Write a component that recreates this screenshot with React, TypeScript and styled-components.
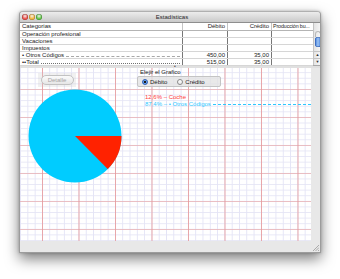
import styled, { createGlobalStyle } from 'styled-components'

const GlobalStyle = createGlobalStyle`
  html, body {
    margin: 0;
    padding: 0;
    background: #ffffff;
  }
  body {
    font-family: 'Liberation Sans', Arial, sans-serif;
  }
`

type Row = {
  label: string
  debit?: string
  credit?: string
  leader?: 'dash' | 'dot'
}

const rows: Row[] = [
  { label: 'Operación profesional' },
  { label: 'Vacaciones' },
  { label: 'Impuestos' },
  { label: '• Otros Códigos', debit: '450,00', credit: '35,00', leader: 'dash' },
  { label: '••Total', debit: '515,00', credit: '35,00', leader: 'dot' },
]

const App = () => {
  return (
    <Page>
      <GlobalStyle />
      <Window>
        <TitleBar>
          <Lights>
            <Light $color='#f0504a' />
            <Light $color='#f5b43a' />
            <Light $color='#5ec643' />
          </Lights>
          <Title>Estadísticas</Title>
        </TitleBar>

        <TableArea>
          <Table>
            <HeaderRow>
              <Cell>Categorias</Cell>
              <Cell $align='right'>Débito</Cell>
              <Cell $align='right'>Crédito</Cell>
              <Cell $tight>Producción bu...</Cell>
            </HeaderRow>
            {rows.map((r) => (
              <BodyRow key={r.label}>
                <Cell>
                  <span>{r.label}</span>
                  {r.leader && <Leader $kind={r.leader} />}
                </Cell>
                <Cell $align='right'>{r.debit}</Cell>
                <Cell $align='right'>{r.credit}</Cell>
                <Cell />
              </BodyRow>
            ))}
          </Table>
          <ScrollBar>
            <ScrollCap />
            <ScrollThumb />
            <ScrollSpace />
            <ScrollArrow>▲</ScrollArrow>
            <ScrollArrow>▼</ScrollArrow>
          </ScrollBar>
        </TableArea>

        <Splitter>
          <span>•</span>
        </Splitter>

        <Body>
          <GraphPaper>
            <TopRow>
              <ButtonWell>
                <DisabledButton disabled>Detalle</DisabledButton>
              </ButtonWell>
              <Chooser>
                <ChooserLabel>Elejir el Grafico</ChooserLabel>
                <RadioBox>
                  <RadioItem>
                    <Radio $checked />
                    Débito
                  </RadioItem>
                  <RadioItem>
                    <Radio />
                    Crédito
                  </RadioItem>
                </RadioBox>
              </Chooser>
            </TopRow>
            <ChartRow>
              <PieChart width='94' height='94' viewBox='0 0 94 94'>
                <circle cx='47' cy='47' r='46.5' fill='#00ccff' />
                <path d='M47 47 L93.5 47 A46.5 46.5 0 0 1 79.7 80.1 Z' fill='#ff2200' />
              </PieChart>
              <Legend>
                <LegendLine $color='#ff3b3b'>12,6% – Coche</LegendLine>
                <LegendLine $color='#2ec8ff'>
                  87,4% – • Otros Códigos
                  <LegendLeader />
                </LegendLine>
              </Legend>
            </ChartRow>
          </GraphPaper>
          <Footer>
            <Grip>
              <svg width='7' height='7' viewBox='0 0 7 7'>
                <path d='M1 7 L7 1 M3.5 7 L7 3.5 M6 7 L7 6' stroke='#9a9a9a' strokeWidth='0.8' />
              </svg>
            </Grip>
          </Footer>
        </Body>
      </Window>
    </Page>
  )
}

export default App

const Page = styled.div`
  width: 340px;
  height: 279px;
  padding: 11px 0 0 19px;
  box-sizing: border-box;
`

const Window = styled.div`
  width: 302px;
  height: 242px;
  display: flex;
  flex-direction: column;
  background: #e8e8e8;
  border: 1px solid #9c9c9c;
  border-top-color: #b0b0b0;
  border-radius: 4px 4px 0 0;
  box-shadow: 0 6px 14px rgba(0, 0, 0, 0.5), 0 0 3px rgba(0, 0, 0, 0.25);
  box-sizing: border-box;
  overflow: hidden;
`

const TitleBar = styled.div`
  position: relative;
  height: 10px;
  flex: none;
  display: flex;
  align-items: center;
  justify-content: center;
  background: linear-gradient(#ececec, #c9c9c9);
  border-bottom: 1px solid #8e8e8e;
`

const Lights = styled.div`
  position: absolute;
  left: 2px;
  top: 2px;
  display: flex;
  gap: 1px;
`

const Light = styled.div<{ $color: string }>`
  width: 6px;
  height: 6px;
  border-radius: 50%;
  background: radial-gradient(circle at 50% 35%, #fff8 0, ${(p) => p.$color} 55%);
  box-shadow: inset 0 0 0 0.5px rgba(0, 0, 0, 0.35);
`

const Title = styled.div`
  font-size: 6px;
  color: #262626;
  line-height: 10px;
  margin-left: 4px;
`

const TableArea = styled.div`
  height: 42px;
  flex: none;
  display: flex;
  background: #ffffff;
  border-bottom: 1px solid #a8a8a8;
`

const Table = styled.div`
  flex: 1;
  display: flex;
  flex-direction: column;
`

const RowBase = styled.div`
  height: 7px;
  display: grid;
  grid-template-columns: 162px 45px 44px 42px;
  font-size: 6px;
  line-height: 7px;
  color: #1a1a1a;
  box-sizing: border-box;
`

const HeaderRow = styled(RowBase)`
  border-bottom: 1px solid #b4b4b4;
  height: 8px;
  & > div + div {
    border-left: 1px solid #c4c4c4;
  }
`

const BodyRow = styled(RowBase)`
  border-bottom: 1px solid #d6d6d6;
  & > div + div {
    border-left: 1px solid #777777;
  }
`

const Cell = styled.div<{ $align?: 'left' | 'right'; $tight?: boolean }>`
  display: flex;
  align-items: center;
  justify-content: ${(p) => (p.$align === 'right' ? 'flex-end' : 'flex-start')};
  padding: 0 ${(p) => (p.$tight ? '1px' : '2px')};
  overflow: hidden;
  white-space: nowrap;
  font-size: ${(p) => (p.$tight ? '5.3px' : '6px')};
  letter-spacing: ${(p) => (p.$tight ? '-0.1px' : '0')};
  span {
    flex: none;
  }
`

const Leader = styled.div<{ $kind: 'dash' | 'dot' }>`
  flex: 1;
  margin: 3px 0 0 2px;
  border-bottom: 1px ${(p) => (p.$kind === 'dash' ? 'dashed #a8a8a8' : 'dotted #707070')};
`

const ScrollBar = styled.div`
  width: 8px;
  flex: none;
  display: flex;
  flex-direction: column;
  align-items: center;
  border-left: 1px solid #c4c4c4;
  background: linear-gradient(to right, #e4e4e4, #f8f8f8);
  padding-top: 8px;
  box-sizing: border-box;
`

const ScrollCap = styled.div`
  width: 6px;
  height: 6px;
  border-radius: 3px 3px 0 0;
  border: 1px solid #b8b8b8;
  border-bottom: none;
  box-sizing: border-box;
`

const ScrollThumb = styled.div`
  width: 6px;
  height: 10px;
  border-radius: 3px;
  background: linear-gradient(to right, #3d78d8, #9cc4f4 50%, #3d78d8);
  box-shadow: inset 0 0 0 0.5px #2a56a8;
`

const ScrollSpace = styled.div`
  flex: 1;
`

const ScrollArrow = styled.div`
  width: 8px;
  height: 6px;
  font-size: 4px;
  line-height: 6px;
  text-align: center;
  color: #333;
  border-top: 1px solid #c4c4c4;
`

const Splitter = styled.div`
  height: 2px;
  flex: none;
  position: relative;
  background: #e0e0e0;
  span {
    position: absolute;
    left: 154px;
    top: -3px;
    font-size: 5px;
    color: #555;
  }
`

const Body = styled.div`
  flex: 1;
  display: flex;
  flex-direction: column;
`

const GraphPaper = styled.div`
  height: 173px;
  flex: none;
  margin: 0 9px 0 0;
  display: flex;
  flex-direction: column;
  background-color: #ffffff;
  background-image:
    linear-gradient(to right, rgba(232, 150, 150, 0.8) 1px, transparent 1px),
    linear-gradient(to bottom, rgba(232, 160, 160, 0.6) 1px, transparent 1px),
    linear-gradient(to right, #e4e4f6 1px, transparent 1px),
    linear-gradient(to bottom, #e8e8f6 1px, transparent 1px);
  background-size: 36.5px 100%, 100% 28px, 7.3px 100%, 100% 5.6px;
  background-position: 22px 0, 0 21px, 0.1px 0, 0 4.2px;
`

const TopRow = styled.div`
  height: 21px;
  flex: none;
  display: flex;
  align-items: flex-start;
`

const ButtonWell = styled.div`
  width: 38px;
  height: 14px;
  margin: 5px 0 0 18px;
  display: flex;
  align-items: center;
  justify-content: center;
  background: rgba(200, 200, 200, 0.25);
`

const DisabledButton = styled.button`
  width: 33px;
  height: 10px;
  padding: 0;
  border: 1px solid #c2c2c2;
  border-radius: 5px;
  background: linear-gradient(#fbfbfb, #e6e6e6);
  font-family: 'Liberation Sans', Arial, sans-serif;
  font-size: 6px;
  line-height: 8px;
  color: #a4a4a4;
`

const Chooser = styled.div`
  margin-left: 61px;
  display: flex;
  flex-direction: column;
  align-items: flex-start;
`

const ChooserLabel = styled.div`
  font-size: 6px;
  line-height: 8px;
  color: #1a1a1a;
  margin-left: 3px;
`

const RadioBox = styled.div`
  width: 84px;
  height: 11px;
  display: flex;
  align-items: center;
  gap: 10px;
  padding-left: 4px;
  box-sizing: border-box;
  background: rgba(225, 225, 225, 0.75);
  border: 1px solid #c4c4c4;
  border-radius: 2px;
`

const RadioItem = styled.label`
  display: flex;
  align-items: center;
  gap: 2px;
  font-size: 6px;
  color: #1a1a1a;
`

const Radio = styled.span<{ $checked?: boolean }>`
  width: 6px;
  height: 6px;
  border-radius: 50%;
  box-sizing: border-box;
  border: 1px solid ${(p) => (p.$checked ? '#2c5fb8' : '#8a8a8a')};
  background: ${(p) =>
    p.$checked
      ? 'radial-gradient(circle, #1a1a1a 0 1px, #7fb2f0 1.2px, #3c7ad8 100%)'
      : 'linear-gradient(#ffffff, #eaeaea)'};
`

const ChartRow = styled.div`
  display: flex;
  align-items: flex-start;
`

const PieChart = styled.svg`
  flex: none;
  margin: 0 0 0 8px;
  display: block;
`

const Legend = styled.div`
  flex: 1;
  margin: 5px 0 0 23px;
  display: flex;
  flex-direction: column;
`

const LegendLine = styled.div<{ $color: string }>`
  display: flex;
  align-items: center;
  height: 7px;
  font-size: 6px;
  line-height: 7px;
  white-space: nowrap;
  color: ${(p) => p.$color};
`

const LegendLeader = styled.div`
  flex: 1;
  margin-left: 2px;
  border-bottom: 1px dashed #2ec8ff;
`

const Footer = styled.div`
  flex: 1;
  display: flex;
  justify-content: flex-end;
  align-items: flex-end;
`

const Grip = styled.div`
  width: 8px;
  height: 8px;
  svg {
    display: block;
  }
`
